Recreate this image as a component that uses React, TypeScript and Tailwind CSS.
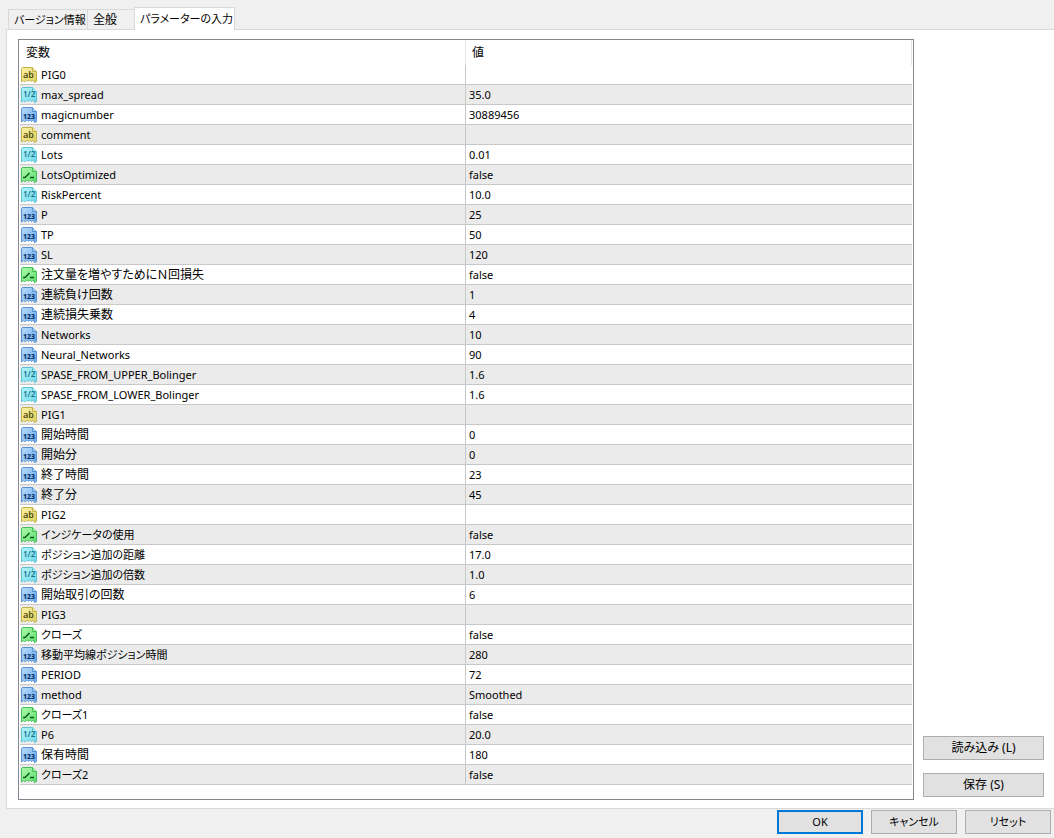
import { useState } from 'react';
import clsx from 'clsx';

type ParamType = 'string' | 'double' | 'int' | 'bool';

interface Param {
  type: ParamType;
  name: string;
  value: string;
}

const params: Param[] = [
  { type: 'string', name: 'PIG0', value: '' },
  { type: 'double', name: 'max_spread', value: '35.0' },
  { type: 'int', name: 'magicnumber', value: '30889456' },
  { type: 'string', name: 'comment', value: '' },
  { type: 'double', name: 'Lots', value: '0.01' },
  { type: 'bool', name: 'LotsOptimized', value: 'false' },
  { type: 'double', name: 'RiskPercent', value: '10.0' },
  { type: 'int', name: 'P', value: '25' },
  { type: 'int', name: 'TP', value: '50' },
  { type: 'int', name: 'SL', value: '120' },
  { type: 'bool', name: '注文量を増やすためにＮ回損失', value: 'false' },
  { type: 'int', name: '連続負け回数', value: '1' },
  { type: 'int', name: '連続損失乗数', value: '4' },
  { type: 'int', name: 'Networks', value: '10' },
  { type: 'int', name: 'Neural_Networks', value: '90' },
  { type: 'double', name: 'SPASE_FROM_UPPER_Bolinger', value: '1.6' },
  { type: 'double', name: 'SPASE_FROM_LOWER_Bolinger', value: '1.6' },
  { type: 'string', name: 'PIG1', value: '' },
  { type: 'int', name: '開始時間', value: '0' },
  { type: 'int', name: '開始分', value: '0' },
  { type: 'int', name: '終了時間', value: '23' },
  { type: 'int', name: '終了分', value: '45' },
  { type: 'string', name: 'PIG2', value: '' },
  { type: 'bool', name: 'インジケータの使用', value: 'false' },
  { type: 'double', name: 'ポジション追加の距離', value: '17.0' },
  { type: 'double', name: 'ポジション追加の倍数', value: '1.0' },
  { type: 'int', name: '開始取引の回数', value: '6' },
  { type: 'string', name: 'PIG3', value: '' },
  { type: 'bool', name: 'クローズ', value: 'false' },
  { type: 'int', name: '移動平均線ポジション時間', value: '280' },
  { type: 'int', name: 'PERIOD', value: '72' },
  { type: 'int', name: 'method', value: 'Smoothed' },
  { type: 'bool', name: 'クローズ1', value: 'false' },
  { type: 'double', name: 'P6', value: '20.0' },
  { type: 'int', name: '保有時間', value: '180' },
  { type: 'bool', name: 'クローズ2', value: 'false' },
];

const tabs = [
  { label: 'バージョン情報', width: 'w-[79px]' },
  { label: '全般', width: 'w-[47px]' },
  { label: 'パラメーターの入力', width: 'w-[101px]' },
];

const iconColors: Record<ParamType, { light: string; dark: string; edge: string; ink: string }> = {
  string: { light: '#f4ec9a', dark: '#dfcf58', edge: '#c2b14c', ink: '#4f4a12' },
  double: { light: '#a5eff8', dark: '#6fd6e7', edge: '#5fc0d2', ink: '#17708a' },
  int: { light: '#a9d3fb', dark: '#69a7e8', edge: '#5a93d0', ink: '#0b2f66' },
  bool: { light: '#a0f5a0', dark: '#5cdb6c', edge: '#48bb5a', ink: '#0d5a1c' },
};

function textSize(text: string) {
  return /^[\x20-\x7e]+$|[ァ-ー]/.test(text) ? 'text-[11px]' : 'text-[12px]';
}

function TypeIcon({ type }: { type: ParamType }) {
  const c = iconColors[type];

  return (
    <svg className="block size-4 shrink-0" viewBox="0 0 16 16" aria-hidden="true">
      <defs>
        <linearGradient id={`fill-${type}`} x1="0" y1="0" x2="1" y2="1">
          <stop offset="0.2" stopColor={c.light} />
          <stop offset="1" stopColor={c.dark} />
        </linearGradient>
      </defs>
      <path
        d="M1.5 0.5H11.5L15.5 4.5V14.5L13.5 15.5L12.5 13.5H11.5L10.5 14.5L9.5 13.5H8.5L7.5 14.5L6.5 13.5H5.5L4.5 14.5H3.5L2.5 13.5L1.5 14.5L0.5 15V1.5Z"
        fill={`url(#fill-${type})`}
        stroke={c.edge}
      />
      <path d="M11.5 0.5V4.5H15.5" fill={c.light} stroke={c.edge} />
      {type === 'string' && (
        <text x="2" y="11" fontSize="9" fontWeight="600" fill={c.ink}>ab</text>
      )}
      {type === 'double' && (
        <text x="2" y="10" fontSize="8" fontWeight="600" fill={c.ink}>
          1/2
        </text>
      )}
      {type === 'int' && (
        <text x="2" y="12" fontSize="7" fontWeight="800" fill={c.ink}>123</text>
      )}
      {type === 'bool' && (
        <path d="M2 10.5H4L8.5 6M9 10.5H13" fill="none" stroke={c.ink} strokeWidth="1.5" />
      )}
    </svg>
  );
}

function DialogButton({ label, className }: { label: string; className?: string }) {
  return (
    <button
      type="button"
      className={clsx(
        'flex h-6 items-center justify-center bg-[#e1e1e1] hover:bg-[#e5f1fb]',
        textSize(label),
        className
      )}
    >
      {label}
    </button>
  );
}

export default function App() {
  const [activeTab, setActiveTab] = useState(2);

  return (
    <div className="flex min-h-screen flex-col bg-[#f0f0f0] pt-[7px] font-['Noto_Sans','Noto_Sans_CJK_JP',sans-serif] text-[12px] leading-4 text-black [font-feature-settings:'palt']">
      <div role="tablist" className="flex items-end pl-2">
        {tabs.map((tab, index) => (
          <button
            key={tab.label}
            type="button"
            role="tab"
            aria-selected={activeTab === index}
            onClick={() => setActiveTab(index)}
            className={clsx(
              'flex items-center whitespace-nowrap border-t border-l border-[#d9d9d9] pl-[5px]',
              activeTab === index ? 'z-10 -mb-px h-[23px] border-r bg-white' : 'h-5 last:border-r',
              tab.width,
              textSize(tab.label)
            )}
          >
            {tab.label}
          </button>
        ))}
      </div>

      <main className="ml-[6px] flex border-y border-l border-[#d9d9d9] bg-white pt-[9px] pr-[10px] pb-2 pl-[11px]">
        <div className="min-w-0 flex-1 border border-[#828790] px-px pb-[14px]">
          <table className="w-full table-fixed border-separate border-spacing-0">
            <thead>
              <tr className="h-[25px] text-left">
                <th className="w-1/2 border-r border-[#e5e5e5] p-0 pl-[6px] font-normal">変数</th>
                <th className="w-1/2 border-r border-[#e5e5e5] p-0 pl-[6px] font-normal">値</th>
              </tr>
            </thead>
            <tbody>
              {params.map((param) => (
                <tr key={param.name} className="h-5 even:bg-[#ebebeb]">
                  <td className="border-r border-b border-[#c8c8c8] p-0 pl-px">
                    <div
                      className={clsx(
                        'flex h-[19px] items-center gap-1 whitespace-nowrap',
                        textSize(param.name)
                      )}
                    >
                      <TypeIcon type={param.type} />
                      {param.name}
                    </div>
                  </td>
                  <td className="border-b border-[#c8c8c8] p-0 pl-[3px] text-[11px]">{param.value}</td>
                </tr>
              ))}
            </tbody>
          </table>
        </div>

        <div className="ml-[9px] flex w-[121px] flex-col justify-end gap-[13px] pb-[3px]">
          <DialogButton label="読み込み (L)" className="border border-[#adadad]" />
          <DialogButton label="保存 (S)" className="border border-[#adadad]" />
        </div>
      </main>

      <footer className="flex justify-end gap-2 pt-px pr-[3px] pb-1">
        <DialogButton label="OK" className="w-[86px] border-2 border-[#0078d7]" />
        <DialogButton label="キャンセル" className="w-[86px] border border-[#adadad]" />
        <DialogButton label="リセット" className="w-[86px] border border-[#adadad]" />
      </footer>
    </div>
  );
}
